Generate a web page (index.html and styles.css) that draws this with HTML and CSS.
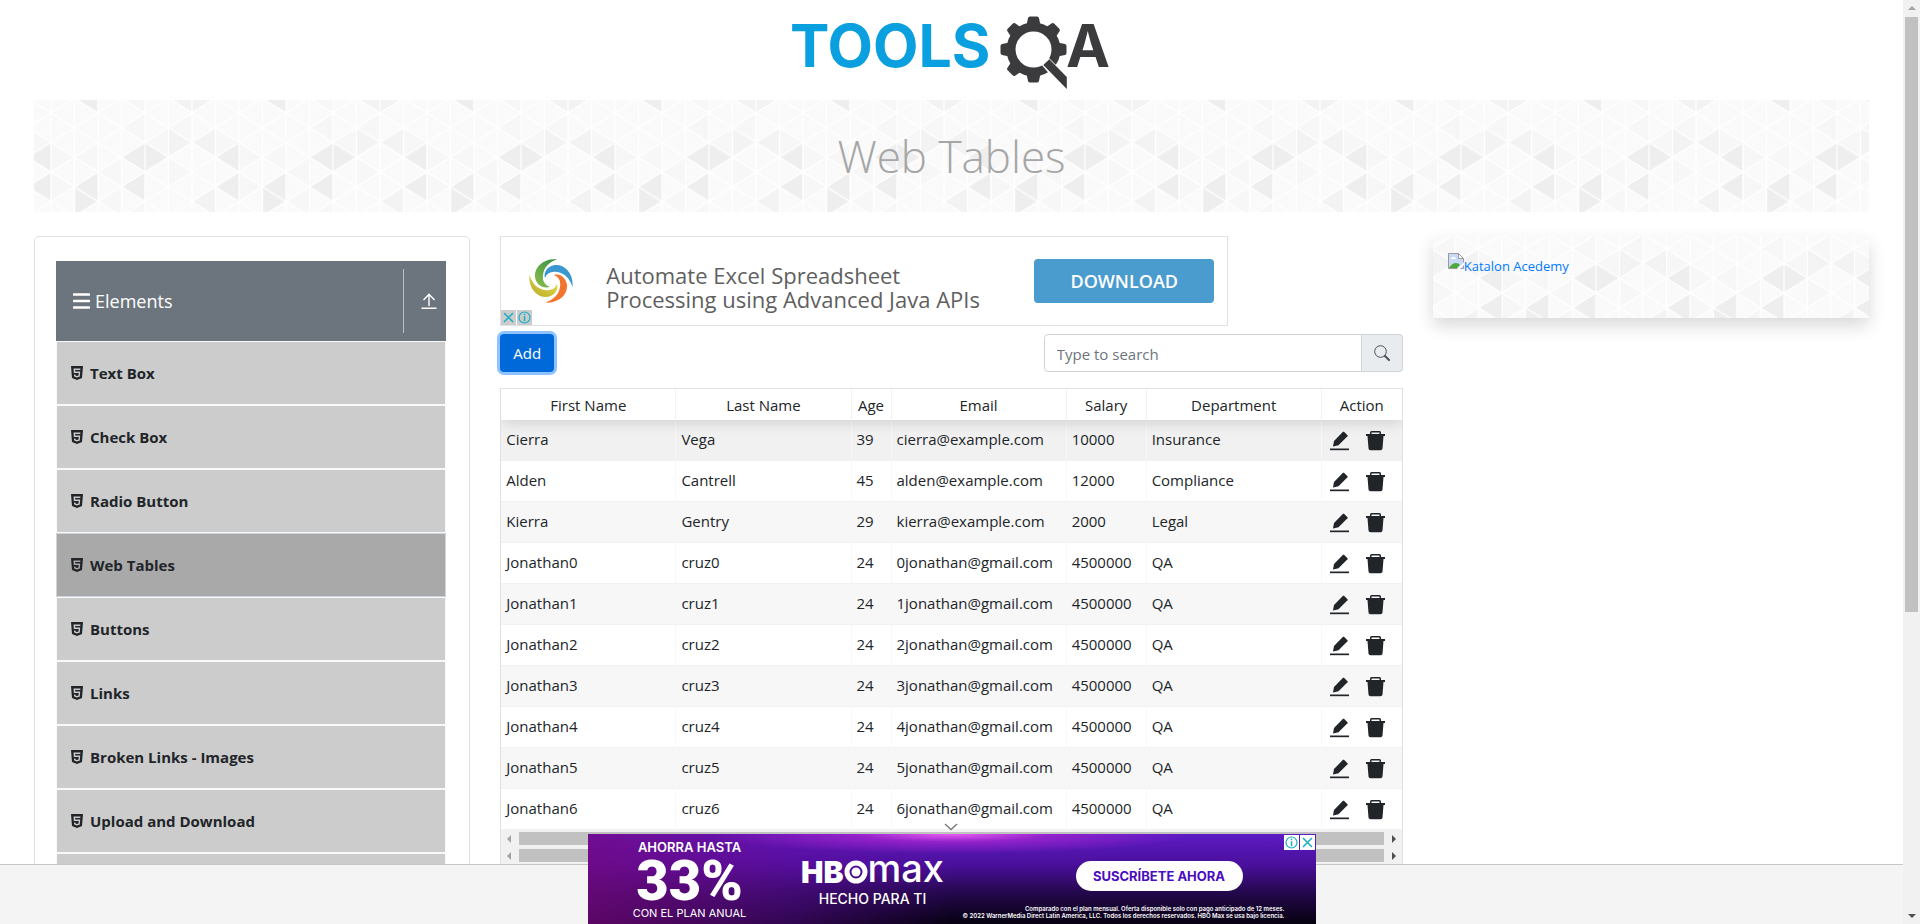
FILE: index.html
```html
<!DOCTYPE html>
<html lang="en">
<head>
<meta charset="utf-8">
<title>Web Tables</title>
<link rel="stylesheet" href="styles.css">
</head>
<body>
<svg class="sprite" aria-hidden="true">
  <symbol id="html5" viewBox="0 0 12 14"><path fill-rule="evenodd" d="M0 0h12l-1 12-5 2-5-2zM2.500 2.500l.3 4.500h4.900l-.2 2.500-1.500.5-1.500-.5-.1-1H3l.2 2L6 11.400l2.800-.9.4-5H4.200l-.1-1.500h5.200l.1-1.500z"/></symbol>
  <symbol id="edit" viewBox="0 0 19 20"><path d="M14 .8 17.500 4.300a1 1 0 0 1 0 1L8.500 14.300 3.300 15.600 3 15.200 4 10 13 .8a1 1 0 0 1 1 0z"/><path d="M0 17.500h19v1.700H0z"/></symbol>
  <symbol id="trash" viewBox="0 0 19 20"><path fill-rule="evenodd" d="M4 3V1.500Q4 0 5.500 0h8Q15 0 15 1.500V3h4v2h-1.500L16.500 17.500Q16.400 19.300 14.500 19.300h-10Q2.600 19.300 2.500 17.500L1.500 5H0V3zM5.500 3h8V1.500h-8z"/></symbol>
  <symbol id="info" viewBox="0 0 15 15"><circle cx="7.500" cy="7.500" r="5.500" fill="none" stroke="#19acc8" stroke-width="1.200"/><path d="M6.800 3.800h1.500v1.400H6.800zM6.800 6.200h1.500v5H6.800z" fill="#19acc8"/></symbol>
  <symbol id="close" viewBox="0 0 15 15"><path d="M3 3l9 9M12 3l-9 9" fill="none" stroke="#19acc8" stroke-width="1.500"/></symbol>
</svg>

<div class="app">
  <main class="page">
    <header class="top">
      <a href="#" aria-label="ToolsQA home">
        <svg class="logo" viewBox="0 0 323 74">
          <defs><path id="tooth" d="M-7-24-5.500-31.500Q-5-33-3.500-33H3.500Q5-33 5.500-31.500L7-24z"/></defs>
          <text class="logo-tools" x="0" y="51">TOOLS</text>
          <g transform="translate(243.500 33.500)" fill="#3b3b3d">
            <circle r="22.500" fill="none" stroke="#3b3b3d" stroke-width="9"/>
            <use href="#tooth"/>
            <use href="#tooth" transform="rotate(45)"/>
            <use href="#tooth" transform="rotate(90)"/>
            <use href="#tooth" transform="rotate(180)"/>
            <use href="#tooth" transform="rotate(225)"/>
            <use href="#tooth" transform="rotate(270)"/>
            <use href="#tooth" transform="rotate(315)"/>
            <path d="M7 14 14 7 36 29 34 46z" fill="#fff"/>
            <path d="M9.800 15.500 15.800 9.800 33.300 27.500V39.500z"/>
          </g>
          <text class="logo-a" x="276" y="51">A</text>
        </svg>
      </a>
    </header>

    <section class="banner pattern"><h1>Web Tables</h1></section>

    <div class="columns">
      <nav class="sidebar">
        <button class="group" type="button">
          <svg class="bars" viewBox="0 0 17 16"><path d="M1 1.500h15M1 8h15M1 14.500h15" stroke="#fff" stroke-width="2.600" stroke-linecap="round"/></svg>
          <span>Elements</span>
          <span class="collapse"><svg viewBox="0 0 16 16"><path d="M8 13V1.500M2.500 7 8 1.200 13.500 7M.5 15.200h15" fill="none" stroke="#fff" stroke-width="1.400"/></svg></span>
        </button>
        <ul class="menu">
          <li><a href="#"><svg><use href="#html5"/></svg>Text Box</a></li>
          <li><a href="#"><svg><use href="#html5"/></svg>Check Box</a></li>
          <li><a href="#"><svg><use href="#html5"/></svg>Radio Button</a></li>
          <li><a class="active" href="#"><svg><use href="#html5"/></svg>Web Tables</a></li>
          <li><a href="#"><svg><use href="#html5"/></svg>Buttons</a></li>
          <li><a href="#"><svg><use href="#html5"/></svg>Links</a></li>
          <li><a href="#"><svg><use href="#html5"/></svg>Broken Links - Images</a></li>
          <li><a href="#"><svg><use href="#html5"/></svg>Upload and Download</a></li>
          <li><a href="#" aria-label="More"></a></li>
        </ul>
      </nav>

      <section class="content">
        <aside class="ad">
          <svg class="swirl" viewBox="0 0 44 44" aria-hidden="true">
            <defs>
              <linearGradient id="gg" x1="0" y1="1" x2="1" y2="0"><stop offset="0" stop-color="#8fc04a"/><stop offset="1" stop-color="#2f8d45"/></linearGradient>
              <linearGradient id="gy" x1="0" y1="1" x2="1" y2="0"><stop offset="0" stop-color="#b5a92b"/><stop offset="1" stop-color="#f0e04a"/></linearGradient>
            </defs>
            <path fill="url(#gg)" d="M28 .5C14-1 5 9 6 18c1 7 7 12 15 10-5-2-8-6-7-12C15 8 20 3 28 .5z"/>
            <path fill="#3a97cf" d="M43.500 28C45 14 35 5 26 6c-7 1-12 7-10 13 2-5 6-7 12-6 8 1 13 7 15.500 15z"/>
            <path fill="#f2742f" d="M16 43.500C30 45 39 35 38 26c-1-7-7-12-13-10 5 2 7 6 6 12-1 8-7 13-15 15.500z"/>
            <path fill="url(#gy)" d="M.5 16C-1 30 9 39 18 38c7-1 12-7 10-13-2 5-6 7-12 6C8 30 3 24 .5 16z"/>
          </svg>
          <p>Automate Excel Spreadsheet<br>Processing using Advanced Java APIs</p>
          <a class="download" href="#">DOWNLOAD</a>
          <span class="badges grey"><svg><use href="#close"/></svg><svg><use href="#info"/></svg></span>
        </aside>

        <div class="toolbar">
          <button class="add" type="button">Add</button>
          <form class="search">
            <input type="text" placeholder="Type to search" aria-label="Type to search">
            <button type="button" aria-label="Search"><svg viewBox="0 0 16 16"><circle cx="6.500" cy="6.500" r="5.800" fill="none" stroke="#495057" stroke-width="1"/><path d="M11 11l4 4" stroke="#495057" stroke-width="2" stroke-linecap="round"/></svg></button>
          </form>
        </div>

        <div class="grid">
          <table>
            <colgroup><col><col><col class="c-age"><col><col class="c-salary"><col><col class="c-action"></colgroup>
            <thead><tr><th>First Name</th><th>Last Name</th><th>Age</th><th>Email</th><th>Salary</th><th>Department</th><th>Action</th></tr></thead>
            <tbody id="rows"></tbody>
          </table>
          <div class="hbar"><i class="left"></i><b></b><i class="right"></i></div>
          <div class="hbar"><i class="left"></i><b></b><i class="right"></i></div>
        </div>
      </section>

      <aside class="promo pattern">
        <a href="#"><svg viewBox="0 0 16 16" aria-hidden="true"><path d="M.5.5h10l5 5v10H.5z" fill="#c9daf8" stroke="#9a9a9a"/><path d="M10.500.5v5h5z" fill="#fff" stroke="#9a9a9a"/><path d="M3 6q0-2 2-2 2-1 3 2z" fill="#fff"/><path d="M1 15q3-5 7-5 3 0 4 2l-3 3z" fill="#4ea83a"/><path d="M9 16l7-7v3l-4 4z" fill="#fff"/></svg>Katalon Acedemy</a>
      </aside>
    </div>

    <footer class="dock">
      <svg class="chevron" viewBox="0 0 14 8"><path d="M1 1l6 5.500L13 1" fill="none" stroke="#777" stroke-width="1.300"/></svg>
      <div class="hbo">
        <div class="offer"><span class="save">AHORRA HASTA</span><strong>33%</strong><span class="plan">CON EL PLAN ANUAL</span></div>
        <div class="brand"><div class="wordmark"><b>HB</b><svg viewBox="0 0 24 24"><circle cx="12" cy="12" r="9" fill="none" stroke="#fff" stroke-width="5"/><circle cx="12" cy="12" r="4.500" fill="#fff"/></svg><span>max</span></div><span class="made">HECHO PARA TI</span></div>
        <div class="cta"><a href="#">SUSCRÍBETE AHORA</a><small>Comparado con el plan mensual. Oferta disponible solo con pago anticipado de 12 meses.<br>© 2022 WarnerMedia Direct Latin America, LLC. Todos los derechos reservados. HBO Max se usa bajo licencia.</small></div>
        <span class="badges white"><svg><use href="#info"/></svg><svg><use href="#close"/></svg></span>
      </div>
    </footer>
  </main>
  <div class="vbar" aria-hidden="true"><i class="up"></i><b></b><i class="down"></i></div>
</div>
<script src="script.js"></script>
</body>
</html>
```
FILE: script.js
```js
const people = [
  ["Cierra", "Vega", 39, "cierra@example.com", 10000, "Insurance"],
  ["Alden", "Cantrell", 45, "alden@example.com", 12000, "Compliance"],
  ["Kierra", "Gentry", 29, "kierra@example.com", 2000, "Legal"]
];
for (let i = 0; i < 7; i++) {
  people.push(["Jonathan" + i, "cruz" + i, 24, i + "jonathan@gmail.com", 4500000, "QA"]);
}
const actions = '<td class="actions"><button type="button" aria-label="Edit"><svg><use href="#edit"/></svg></button><button type="button" aria-label="Delete"><svg><use href="#trash"/></svg></button></td>';
document.getElementById("rows").innerHTML = people
  .map(p => "<tr>" + p.map(v => "<td>" + v + "</td>").join("") + actions + "</tr>")
  .join("");
```
FILE: styles.css
```css
* { box-sizing: border-box; }
body {
  margin: 0;
  font: 15px/24px "Open Sans", "Noto Sans", sans-serif;
  color: #212529;
  background: #fff;
  overflow: hidden;
}
button, input { font: inherit; color: inherit; }
button { border: 0; background: none; padding: 0; cursor: pointer; }
a { text-decoration: none; }
.sprite { display: none; }

.app { display: flex; height: 100vh; }
.page { flex: 1; min-width: 0; overflow: hidden; position: relative; padding: 0 34px; }

.top { display: flex; justify-content: center; padding: 16px 0 10px; }
.logo { display: block; width: 323px; height: 74px; overflow: visible; }
.logo-tools { font: 700 59px Inter, sans-serif; fill: #0aa0df; }
.logo-a { font: 700 59px Inter, sans-serif; fill: #3b3b3d; }

.pattern {
  background-color: #fafafa;
  background-size: 188px 177px;
  background-position: calc(50% - 55px) calc(50% + 45px);
  background-image: url("data:image/svg+xml,%3Csvg xmlns='http://www.w3.org/2000/svg' width='188' height='177'%3E%3Cdefs%3E%3Cpattern id='p' width='47' height='29.5' patternUnits='userSpaceOnUse'%3E%3Cpath d='M0 0L47 29.5M0 29.5L47 0M0 0V29.5M23.5 0V29.5M47 0V29.5' stroke='%23fff' stroke-width='1.2' fill='none'/%3E%3C/pattern%3E%3C/defs%3E%3Cpath fill='%23f7f7f7' d='M0 29.500L23.500 44.250 0 59zM23.500 44.250L47 29.500V59zM94 0v29.500L70.500 14.750zM117.500 14.750v29.500L94 29.500zM70.500 44.250v29.500L47 59zM141 0v29.500L117.500 14.750zM164.500 44.250L188 29.500 164.500 14.750zM0 59v29.500L23.500 73.750zM47 88.500L70.500 73.750v29.500zM117.500 44.250v29.500L141 59zM164.500 73.750v29.500L141 88.500zM94 88.500v29.500L70.500 103.250zM0 118l23.500-14.750v29.500zM117.500 103.250v29.500L141 118zM47 118v29.500L70.500 132.750zM94 147.500L117.500 132.750v29.500zM164.500 132.750L188 118v29.500zM23.500 132.750L47 147.500 23.500 162.250zM70.500 162.250L94 147.500V177z'/%3E%3Cpath fill='%23f3f3f3' d='M117.500 14.750v29.500L141 29.500zM141 29.500l23.500-14.750v29.500zM141 88.500l23.500-14.750v29.500zM117.500 162.250L141 147.500V177zM141 147.500V177L164.500 162.250z'/%3E%3Cpath fill='%23eee' d='M70.500 44.250L94 29.500V59zM94 29.500V59L117.500 44.250zM164.500 44.250L188 29.500V59zM70.500 73.750L94 59v29.500zM164.500 73.750L188 59v29.500zM23.500 73.750L47 59v29.500zM23.500 73.750v29.500L47 88.500zM23.500 162.250L47 147.500V177z'/%3E%3Crect width='188' height='177' fill='url(%23p)'/%3E%3C/svg%3E");
}
.banner { height: 112px; display: flex; align-items: center; justify-content: center; }
.banner h1 { margin: 0; font-size: 44px; line-height: 60px; font-weight: 300; color: #a6a6a6; }

.columns { display: grid; grid-template-columns: repeat(4, minmax(0, 1fr)); gap: 30px; margin-top: 24px; align-items: start; }

.sidebar { border: 1px solid #dee2e6; border-radius: 5px; padding: 24px 23px 24px 21px; }
.group { display: flex; align-items: center; width: 100%; height: 80px; padding: 0 9px 0 17px; background: #6c757d; color: #fff; font-size: 18px; gap: 5px; text-align: left; }
.bars { width: 17px; height: 16px; }
.collapse { margin-left: auto; height: 64px; border-left: 1px solid #b9bdc1; padding-left: 17px; display: flex; align-items: center; }
.collapse svg { width: 16px; height: 16px; }
.menu { list-style: none; margin: 0; padding: 0; }
.menu a { display: flex; align-items: center; gap: 7px; height: 64px; padding: 0 14px; border: 1px solid #f8f9fa; background: #ccc; color: #212529; font-weight: 700; font-size: 15px; }
.menu a.active { background: #a9a9a9; border-color: #ced4da; }
.menu svg { width: 12px; height: 14px; fill: #212529; }

.content { grid-column: span 2; }
.ad { position: relative; display: flex; align-items: center; width: 728px; max-width: 100%; height: 90px; border: 1px solid #dfe1e3; padding: 0 13px 0 28px; }
.swirl { width: 44px; height: 44px; }
.ad p { margin: 12px 0 0 33px; font-size: 22px; line-height: 24px; color: #5f5f5f; white-space: nowrap; }
.download { margin-left: auto; width: 180px; height: 44px; border-radius: 4px; background: #4a9ccf; color: #fff; font-size: 18px; font-weight: 600; line-height: 44px; text-align: center; }
.badges { position: absolute; display: flex; gap: 1px; }
.badges svg { width: 15px; height: 15px; }
.grey { left: 0; bottom: 0; }
.grey svg { background: #ccc; }
.white { right: 1px; top: 1px; }
.white svg { background: #fff; }

.toolbar { display: flex; justify-content: space-between; margin-top: 8px; }
.add { height: 38px; padding: 0 13px; border-radius: 4px; background: #0069d9; color: #fff; box-shadow: 0 0 0 3px #8ec3ff; }
.search { display: flex; width: 359px; max-width: 60%; height: 38px; }
.search input { flex: 1; min-width: 0; border: 1px solid #ced4da; border-radius: 4px 0 0 4px; padding: 1px 12px 0; outline: 0; }
.search input::placeholder { color: #6c757d; opacity: 1; }
.search button { width: 41px; border: 1px solid #ced4da; border-left: 0; border-radius: 0 4px 4px 0; background: #e9ecef; display: flex; align-items: center; justify-content: center; }
.search svg { width: 16px; height: 16px; }

.grid { margin-top: 16px; border: 1px solid #e0e0e0; overflow: hidden; }
table { width: 100%; table-layout: fixed; border-collapse: separate; border-spacing: 0; }
.c-age { width: 40px; }
.c-salary { width: 80px; }
.c-action { width: 80px; }
thead { position: relative; z-index: 1; box-shadow: 0 2px 15px rgba(0, 0, 0, .15); }
th { height: 31px; padding: 0; font-weight: 400; background: #fff; border-right: 1px solid #f2f2f2; }
td { height: 41px; padding: 0 0 3px 5px; white-space: nowrap; border-right: 1px solid #f8f8f8; border-bottom: 1px solid #f2f2f2; }
th:last-child, td:last-child { border-right: 0; }
tbody tr:nth-child(odd) { background: #f7f7f7; }
tbody tr:first-child { background: #f1f1f1; }
td.actions { padding: 0 0 2px 8px; }
.actions button { display: inline-block; vertical-align: middle; height: 20px; margin-right: 17px; }
.actions button:last-child { margin: 0; }
.actions svg { display: block; width: 19px; height: 20px; fill: #212529; }

.hbar { display: flex; align-items: center; justify-content: space-between; height: 17px; padding: 0 6px; background: #f1f1f1; }
.hbar b { flex: 1; height: 13px; margin: 0 8px; background: #c1c1c1; }
.hbar i, .vbar i { width: 0; height: 0; border: 4px solid transparent; }
.hbar .left { border-left: 0; border-right-color: #a3a3a3; }
.hbar .right { border-right: 0; border-left-color: #505050; }

.promo { height: 82px; padding: 17px 15px; box-shadow: 0 8px 16px rgba(0, 0, 0, .15); }
.promo a { display: flex; color: #007bff; font-size: 13px; line-height: 26px; }
.promo svg { width: 16px; height: 16px; }

.dock { position: absolute; left: 0; right: 0; bottom: 0; z-index: 2; height: 60px; border-top: 1px solid #c8c8c8; background: #f4f4f4; display: flex; justify-content: center; align-items: flex-end; }
.chevron { position: absolute; bottom: 93px; left: calc(50% - 8px); width: 14px; height: 8px; }
.hbo { position: relative; flex: none; display: flex; width: 728px; height: 90px; padding-right: 31px; color: #fff; font-family: Inter, sans-serif;
  background:
    radial-gradient(ellipse 240px 20px at 50% 0, #e85cf0 0, rgba(184, 40, 212, .6) 40%, transparent 100%),
    linear-gradient(90deg, rgba(120, 8, 130, .75) 0, rgba(100, 12, 160, .45) 28%, transparent 50%),
    linear-gradient(180deg, #5c1bc4 0, #4a0f9a 35%, #24084d 65%, #060110 100%); }
.offer { display: flex; flex-direction: column; align-items: center; width: 204px; padding-top: 5px; white-space: nowrap; }
.save { font-size: 13px; font-weight: 600; line-height: 16px; }
.offer strong { font-family: Roboto, sans-serif; font-size: 56px; font-weight: 900; line-height: 52px; }
.plan { font-size: 11px; line-height: 12px; }
.brand { display: flex; flex-direction: column; align-items: center; width: 160px; padding: 20px 0 0 2px; }
.wordmark { display: flex; align-items: center; height: 36px; font-size: 30px; line-height: 36px; }
.wordmark b { font-weight: 900; }
.wordmark svg { width: 24px; height: 24px; }
.wordmark span { font-size: 38px; font-weight: 500; line-height: 28px; padding-bottom: 8px; }
.made { font-size: 14px; font-weight: 500; line-height: 18px; }
.cta { flex: 1; display: flex; flex-direction: column; align-items: flex-end; padding-top: 27px; text-align: right; }
.cta a { width: 167px; height: 30px; margin-right: 42px; border-radius: 15px; background: #fff; color: #4a0cc0; font-size: 13px; font-weight: 700; line-height: 30px; text-align: center; }
.cta small { margin-top: 14px; font-size: 6px; font-weight: 600; line-height: 7px; white-space: nowrap; }

.vbar { display: flex; flex-direction: column; align-items: center; width: 17px; padding: 6px 0; background: #f1f1f1; }
.vbar b { width: 13px; height: 595px; margin: 7px 0 auto; background: #c1c1c1; }
.vbar .up { border-top: 0; border-bottom-color: #a3a3a3; }
.vbar .down { border-bottom: 0; border-top-color: #505050; }
```
